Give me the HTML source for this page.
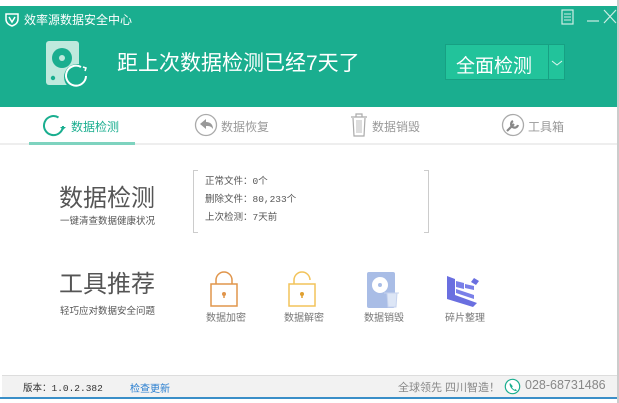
<!DOCTYPE html><html><head><meta charset="utf-8"><style>
*{margin:0;padding:0;box-sizing:border-box}
body{width:619px;height:403px;background:#fff;position:relative;overflow:hidden;font-family:"Liberation Sans","Noto Sans CJK SC",sans-serif}
.a{position:absolute;white-space:nowrap}
</style></head><body>
<div class="a" style="left:0;top:6px;width:617px;height:101px;background:#1aae8f"></div>
<div class="a" style="left:617px;top:0;width:2px;height:403px;background:#ccc"></div>
<svg class="a" style="left:4px;top:11px" width="16" height="16" viewBox="0 0 16 16"><path d="M2 3h12v5c0 4-3 6-6 7c-3-1-6-3-6-7z" fill="none" stroke="#fff" stroke-width="1.5"/><path d="M5 6l3 5l3-5" fill="none" stroke="#fff" stroke-width="1.5"/></svg>
<div class="a" style="left:24px;top:11px;color:#fff;font-size:12px">效率源数据安全中心</div>
<svg class="a" style="left:560px;top:8px" width="58" height="20"><rect x="2" y="2" width="11" height="14" fill="none" stroke="#cdeee5" stroke-width="1.2"/><path d="M4 6h7M4 9h7M4 12h7" stroke="#cdeee5"/><path d="M27 13h12" stroke="#cdeee5" stroke-width="1.2"/><path d="M44 2l12 13M56 2l-12 13" stroke="#cdeee5" stroke-width="1.2"/></svg>
<svg class="a" style="left:44px;top:40px" width="46" height="50"><rect x="2" y="1" width="33" height="44" rx="3" fill="#bfe9dd"/><circle cx="18" cy="18" r="10" fill="#1aae8f"/><circle cx="18" cy="18" r="3" fill="#bfe9dd"/><circle cx="9" cy="38" r="2.2" fill="#1aae8f"/><circle cx="33" cy="37" r="13" fill="#1aae8f"/><path d="M42 36a10 10 0 1 1 -5 -9" fill="none" stroke="#fff" stroke-width="2"/><path d="M39 27l3 1l-1 3" fill="none" stroke="#fff" stroke-width="1.5"/></svg>
<div class="a" style="left:117px;top:47px;color:#fff;font-size:21px">距上次数据检测已经7天了</div>
<div class="a" style="left:445px;top:44px;width:120px;height:36px;background:#22c39b;border:1px solid #17a083"></div>
<div class="a" style="left:548px;top:44px;width:1px;height:36px;background:#17a083"></div>
<div class="a" style="left:456px;top:51px;color:#fff;font-size:19px">全面检测</div>
<svg class="a" style="left:551px;top:59px" width="12" height="8"><path d="M1 2l5 4l5-4" fill="none" stroke="#e0f5ef"/></svg>
<div class="a" style="left:0;top:143px;width:617px;height:2px;background:#eee"></div>
<div class="a" style="left:29px;top:142px;width:106px;height:3px;background:#7ed3bf"></div>
<svg class="a" style="left:41px;top:113px" width="26" height="26"><path d="M22 13a9.5 9.5 0 1 1 -4.5 -8.5" fill="none" stroke="#1aae8f" stroke-width="2"/><path d="M19 14l3 3l3-3" fill="#1aae8f"/></svg>
<div class="a" style="left:71px;top:118px;color:#1aae8f;font-size:12px">数据检测</div>
<svg class="a" style="left:194px;top:113px" width="26" height="26"><circle cx="12" cy="12" r="10.5" fill="none" stroke="#aaa" stroke-width="1.3"/><path d="M6 11l6-5v3c5 0 7 3 7 7c-2-3-4-3-7-3v3z" fill="#999"/></svg>
<div class="a" style="left:221px;top:118px;color:#999;font-size:12px">数据恢复</div>
<svg class="a" style="left:349px;top:112px" width="20" height="26"><path d="M2 5h16M7 5V2h6v3M4 6l1 18h10l1-18" fill="none" stroke="#aaa" stroke-width="1.2"/><path d="M8 8v13M10 8v13M12 8v13" stroke="#bbb"/></svg>
<div class="a" style="left:372px;top:118px;color:#999;font-size:12px">数据销毁</div>
<svg class="a" style="left:501px;top:113px" width="26" height="26"><circle cx="12" cy="12" r="10.5" fill="none" stroke="#aaa" stroke-width="1.3"/><path d="M6 18l7-7M12 8a3.5 3.5 0 1 0 5 4" fill="none" stroke="#888" stroke-width="2.2"/></svg>
<div class="a" style="left:528px;top:118px;color:#999;font-size:12px">工具箱</div>
<div class="a" style="left:59px;top:178px;color:#555;font-size:24px">数据检测</div>
<div class="a" style="left:60px;top:213px;color:#555;font-size:9.5px">一键清查数据健康状况</div>
<div class="a" style="left:193px;top:170px;width:5px;height:63px;border:1px solid #ccc;border-right:none"></div>
<div class="a" style="left:424px;top:170px;width:5px;height:63px;border:1px solid #ccc;border-left:none"></div>
<div class="a" style="left:205px;top:173px;color:#555;font-size:9.5px;line-height:18px;font-family:'Liberation Mono','Noto Sans CJK SC',monospace">正常文件：0个<br>删除文件：80,233个<br>上次检测：7天前</div>
<div class="a" style="left:59px;top:264px;color:#555;font-size:24px">工具推荐</div>
<div class="a" style="left:60px;top:303px;color:#555;font-size:9.5px">轻巧应对数据安全问题</div>
<svg class="a" style="left:208px;top:270px" width="32" height="38"><path d="M8 14V10a8 8 0 0 1 16 0v4" fill="none" stroke="#e0954b" stroke-width="1.5"/><rect x="3" y="14" width="26" height="22" fill="#fff" stroke="#e0954b" stroke-width="1.5"/><circle cx="16" cy="24" r="2" fill="#e0954b"/><path d="M16 25v3" stroke="#e0954b" stroke-width="1.5"/></svg>
<svg class="a" style="left:286px;top:270px" width="32" height="38"><path d="M8 14V10a8 8 0 0 1 16 0" fill="none" stroke="#f2c35a" stroke-width="1.5"/><rect x="3" y="14" width="26" height="22" fill="#fff" stroke="#f2c35a" stroke-width="1.5"/><circle cx="16" cy="24" r="2" fill="#e0a030"/><path d="M16 25v3" stroke="#e0a030" stroke-width="1.5"/></svg>
<svg class="a" style="left:366px;top:272px" width="34" height="36"><rect x="1" y="0" width="28" height="36" rx="2" fill="#a9bde6"/><circle cx="14" cy="13" r="8" fill="#fff"/><circle cx="14" cy="13" r="2" fill="#a9bde6"/><path d="M18 21h15M21 21l1 14h8l1-14" fill="#dde6f6" stroke="#c6d3ee"/></svg>
<svg class="a" style="left:445px;top:272px" width="38" height="36"><path d="M2 4l8 3v16l22 8l-4 4L2 27z" fill="#6a6fe0"/><path d="M11 9l8 2v6l-8-2zM20 12l9 2v4l-9-2zM11 17l18 6v4L11 21z" fill="#7a80e8"/><path d="M29 6l5 3l-3 4l-5-3z" fill="#6a6fe0"/></svg>
<div class="a" style="left:206px;top:309px;color:#777;font-size:10px">数据加密</div>
<div class="a" style="left:284px;top:309px;color:#777;font-size:10px">数据解密</div>
<div class="a" style="left:364px;top:309px;color:#777;font-size:10px">数据销毁</div>
<div class="a" style="left:445px;top:309px;color:#777;font-size:10px">碎片整理</div>
<div class="a" style="left:2px;top:375px;width:615px;height:22px;background:#f2f2f2;border-top:1px solid #ddd"></div>
<div class="a" style="left:0;top:397px;width:617px;height:2px;background:#3a8fc8"></div>
<div class="a" style="left:23px;top:380px;color:#333;font-size:9.5px;font-family:'Liberation Mono','Noto Sans CJK SC',monospace">版本：1.0.2.382</div>
<div class="a" style="left:130px;top:380px;color:#2a7fd0;font-size:10px">检查更新</div>
<div class="a" style="left:398px;top:379px;color:#888;font-size:11px">全球领先 四川智造！</div>
<svg class="a" style="left:504px;top:378px" width="17" height="17"><circle cx="8.5" cy="8.5" r="7.2" fill="#fff" stroke="#1aae8f" stroke-width="1.2"/><path d="M6 5c-1 1 0 4 2 6s4 2.5 5 1.5l-1.5-1.5l-1 .8c-1-.5-2-1.5-2.5-2.5l.8-1z" fill="#1aae8f"/></svg>
<div class="a" style="left:525px;top:378px;color:#888;font-size:12.5px">028-68731486</div>
</body></html>
